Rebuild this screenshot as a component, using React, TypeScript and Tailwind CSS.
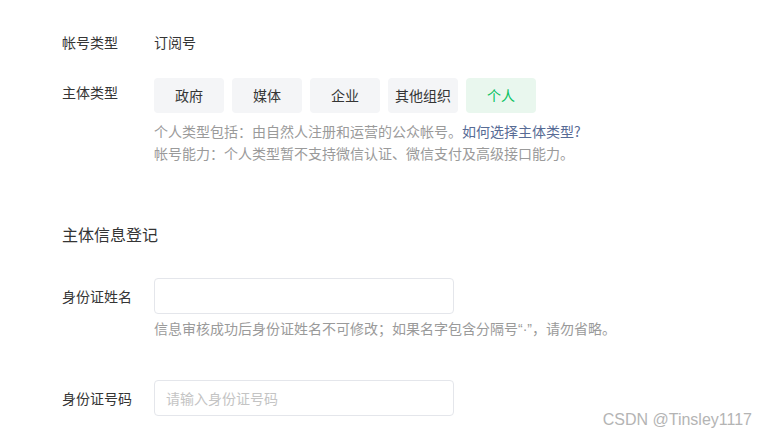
import React from 'react';

const TYPES = ['政府', '媒体', '企业', '其他组织', '个人'];

export default function App() {
    const selected = '个人';
    return (
        <div
            className="relative h-[439px] w-full overflow-hidden bg-white text-[#353535]"
            style={{ fontFamily: '"Microsoft YaHei", "Noto Sans CJK SC", sans-serif' }}
        >
            <div className="pl-[62px] pt-[32px]">
                <div className="flex text-[14px] leading-[20px]">
                    <div className="w-[92px]">帐号类型</div>
                    <div>订阅号</div>
                </div>

                <div className="mt-[26px] flex items-start text-[14px]">
                    <div className="w-[92px] pt-[4px] leading-[20px]">主体类型</div>
                    <div>
                        <div className="flex gap-2">
                            {TYPES.map(t => (
                                <div
                                    key={t}
                                    className={
                                        t === selected
                                            ? 'flex h-[35px] w-[70px] items-center justify-center rounded bg-[#e9f7ee] text-[#07c160]'
                                            : 'flex h-[35px] w-[70px] items-center justify-center rounded bg-[#f4f5f7]'
                                    }
                                >
                                    {t}
                                </div>
                            ))}
                        </div>
                        <div className="mt-[7px] text-[14px] leading-[22px] text-[#9a9a9a]">
                            <p>
                                个人类型包括：由自然人注册和运营的公众帐号。
                                <span className="text-[#576b95]">如何选择主体类型?</span>
                            </p>
                            <p>帐号能力：个人类型暂不支持微信认证、微信支付及高级接口能力。</p>
                        </div>
                    </div>
                </div>

                <h2 className="mt-[58px] text-[16px] leading-[24px]">主体信息登记</h2>

                <div className="mt-[32px] flex items-center text-[14px]">
                    <div className="w-[92px]">身份证姓名</div>
                    <div className="h-[36px] w-[300px] rounded border border-[#e4e6eb]" />
                </div>
                <p className="ml-[92px] mt-[3px] text-[14px] leading-[22px] text-[#9a9a9a]">
                    信息审核成功后身份证姓名不可修改；如果名字包含分隔号
                    <span style={{ fontFamily: '"Liberation Sans", sans-serif' }}>“·”</span>
                    ，请勿省略。
                </p>

                <div className="mt-[40px] flex items-center text-[14px]">
                    <div className="w-[92px]">身份证号码</div>
                    <div className="flex h-[36px] w-[300px] items-center rounded border border-[#e4e6eb] px-[11px] text-[#c4c4c4]">
                        请输入身份证号码
                    </div>
                </div>
            </div>

            <div
                className="absolute right-[16px] top-[408px] text-[16px] leading-[24px] text-[#b4b4b4]"
                style={{ fontFamily: '"Liberation Sans Narrow", "Liberation Sans", sans-serif' }}
            >
                CSDN @Tinsley1117
            </div>
        </div>
    );
}
